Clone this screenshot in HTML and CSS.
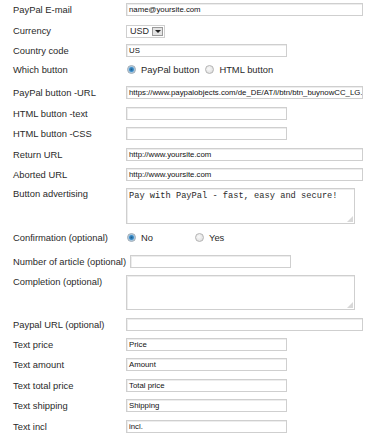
FILE: index.html
```html
<!DOCTYPE html>
<html lang="en">
  <head>
    <meta charset="UTF-8" />
    <title>PayPal settings</title>
    <link rel="stylesheet" href="styles.css">
  </head>
  <body>
    <form class="settings">
      <div class="row h19">
        <label class="label">PayPal E-mail</label>
        <div class="field wide">name@yoursite.com</div>
      </div>
      <div class="row h22">
        <label class="label">Currency</label>
        <div class="select"><span class="select-value">USD</span><span class="select-btn"><span class="arrow"></span></span></div>
      </div>
      <div class="row h18">
        <label class="label">Country code</label>
        <div class="field">US</div>
      </div>
      <div class="row h21">
        <label class="label">Which button</label>
        <div class="radios">
          <span class="radio checked"></span><span class="radio-text">PayPal button</span>
          <span class="radio"></span><span class="radio-text">HTML button</span>
        </div>
      </div>
      <div class="row h24">
        <label class="label">PayPal button -URL</label>
        <div class="field wide">https://www.paypalobjects.com/de_DE/AT/i/btn/btn_buynowCC_LG.gif</div>
      </div>
      <div class="row h18">
        <label class="label">HTML button -text</label>
        <div class="field"></div>
      </div>
      <div class="row h22">
        <label class="label">HTML button -CSS</label>
        <div class="field"></div>
      </div>
      <div class="row h20">
        <label class="label">Return URL</label>
        <div class="field wide">http://www.yoursite.com</div>
      </div>
      <div class="row h20">
        <label class="label">Aborted URL</label>
        <div class="field wide">http://www.yoursite.com</div>
      </div>
      <div class="row tall">
        <label class="label">Button advertising</label>
        <div class="area mono">Pay with PayPal - fast, easy and secure!<span class="grip"></span></div>
      </div>
      <div class="row h18">
        <label class="label">Confirmation (optional)</label>
        <div class="radios">
          <span class="radio checked"></span><span class="radio-text no">No</span>
          <span class="radio"></span><span class="radio-text">Yes</span>
        </div>
      </div>
      <div class="row h30">
        <label class="label">Number of article (optional)</label>
        <div class="field"></div>
      </div>
      <div class="row tall completion">
        <label class="label">Completion (optional)</label>
        <div class="area"><span class="grip"></span></div>
      </div>
      <div class="row h20">
        <label class="label">Paypal URL (optional)</label>
        <div class="field wide"></div>
      </div>
      <div class="row h20">
        <label class="label">Text price</label>
        <div class="field">Price</div>
      </div>
      <div class="row h21">
        <label class="label">Text amount</label>
        <div class="field">Amount</div>
      </div>
      <div class="row h20">
        <label class="label">Text total price</label>
        <div class="field">Total price</div>
      </div>
      <div class="row h20">
        <label class="label">Text shipping</label>
        <div class="field">Shipping</div>
      </div>
      <div class="row h22">
        <label class="label">Text incl</label>
        <div class="field">incl.</div>
      </div>
    </form>
  </body>
</html>
```

FILE: styles.css
```css
body {
  margin: 0;
  padding: 0;
  background: #fff;
  font-family: "Liberation Sans", Arial, sans-serif;
  color: #2a2a2a;
}
.settings {
  display: flex;
  flex-direction: column;
  padding: 0 0 0 13px;
}
.row {
  display: flex;
  align-items: center;
  flex-shrink: 0;
}
.h18 { height: 18px; }
.h19 { height: 19px; }
.h20 { height: 20px; }
.h21 { height: 21px; }
.h22 { height: 22px; }
.h24 { height: 24px; }
.h30 { height: 30px; }
.row.tall {
  align-items: flex-start;
  height: 44px;
  padding-top: 4px;
  box-sizing: border-box;
}
.row.tall.completion {
  height: 38px;
  padding-top: 0;
}
.row.tall .label {
  padding-top: 0;
  margin-top: 0;
}
.label {
  flex-shrink: 0;
  min-width: 109px;
  padding-right: 4px;
  font-size: 9.4px;
  line-height: 11px;
  white-space: nowrap;
}
.field {
  box-sizing: border-box;
  width: 161px;
  height: 13px;
  padding: 0 2px;
  border: 1px solid #cfcfcf;
  box-shadow: inset 1px 1px 0 #ededed;
  font-size: 7.8px;
  line-height: 11px;
  white-space: nowrap;
  overflow: hidden;
  color: #111;
}
.field.wide {
  width: 237px;
}
.select {
  display: flex;
  align-items: center;
  box-sizing: border-box;
  width: 39px;
  height: 13px;
  margin-top: 2px;
  padding: 0 1px 0 3px;
  border: 1px solid #cfcfcf;
  font-size: 9px;
  line-height: 11px;
}
.select-value {
  flex: 1;
}
.select-btn {
  display: flex;
  align-items: center;
  justify-content: center;
  box-sizing: border-box;
  width: 11px;
  height: 9px;
  border: 1px solid #9a9a9a;
  background: #e4e4e4;
}
.arrow {
  width: 0;
  height: 0;
  border-left: 3px solid transparent;
  border-right: 3px solid transparent;
  border-top: 3px solid #222;
}
.radios {
  display: flex;
  align-items: center;
  font-size: 9.4px;
  line-height: 11px;
}
.radio {
  box-sizing: border-box;
  width: 9px;
  height: 9px;
  margin: 0 5px 0 1px;
  border-radius: 50%;
  border: 1px solid #b4b4b4;
  background: radial-gradient(circle at 40% 40%, #fafafa, #d8d8d8);
}
.radio.checked {
  background: radial-gradient(circle, #1d5e8c 0, #3f8fcb 2px, #a8c8e0 3px, #e8e8e8 4px);
  border-color: #9aa8b4;
}
.radio-text {
  margin-right: 5px;
}
.radio-text.no {
  margin-right: 41px;
}
.area {
  position: relative;
  box-sizing: border-box;
  width: 229px;
  height: 36px;
  padding: 2px 2px;
  border: 1px solid #cfcfcf;
  box-shadow: inset 1px 1px 0 #ededed;
  font-size: 10px;
  line-height: 11px;
  white-space: nowrap;
  overflow: hidden;
}
.completion .area {
  height: 35px;
  margin-top: -1px;
}
.mono {
  font-family: "Liberation Mono", "Courier New", monospace;
  font-size: 8.7px;
}
.grip {
  position: absolute;
  right: 1px;
  bottom: 1px;
  width: 6px;
  height: 6px;
  background:
    radial-gradient(circle, #aaa 0.6px, transparent 0.8px) 0 0 / 2px 2px;
  clip-path: polygon(100% 0, 100% 100%, 0 100%);
}
```
